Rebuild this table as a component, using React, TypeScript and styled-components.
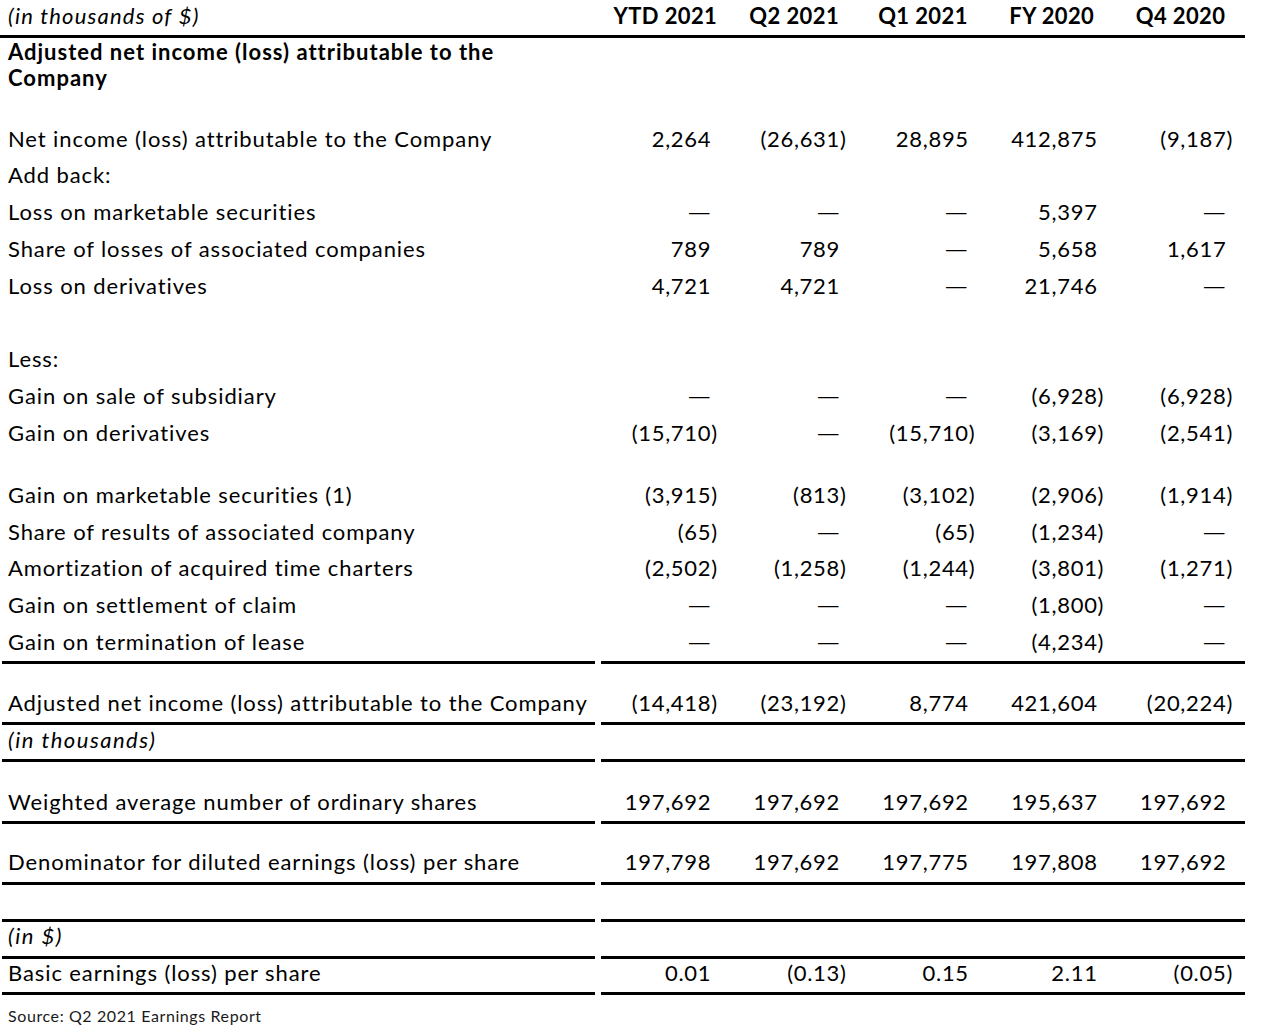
import React from "react";
import styled, { createGlobalStyle } from "styled-components";

const Global = createGlobalStyle`
  *, *::before, *::after { box-sizing: border-box; }
  html, body { margin: 0; padding: 0; background: #ffffff; }
  body {
    font-family: "Lato", "Carlito", "Open Sans", sans-serif;
    color: #000000;
    -webkit-font-smoothing: antialiased;
  }
`;

const Page = styled.div`
  width: 1286px;
  height: 1029px;
  background: #ffffff;
  overflow: hidden;
`;

const Table = styled.div`
  width: 1245px;
  display: flex;
  flex-direction: column;
  font-size: 22px;
  letter-spacing: 0.7px;
`;

const HeaderRow = styled.div`
  display: flex;
  height: 38px;
  padding-bottom: 4px;
  border-bottom: 3px solid #000;
  align-items: center;
`;

const HeaderLabel = styled.div`
  width: 601px;
  padding-left: 8px;
  font-style: italic;
  letter-spacing: 1.2px;
`;

const HeaderCols = styled.div`
  flex: 1;
  display: grid;
  grid-template-columns: repeat(5, 1fr);
`;

const HeaderCell = styled.div`
  text-align: center;
  font-weight: 700;
  letter-spacing: 0.4px;
`;

const TitleBlock = styled.div`
  height: 82.6px;
  padding: 1px 0 0 8px;
  font-weight: 700;
  line-height: 26px;
  letter-spacing: 1px;
  max-width: 540px;
`;

const Row = styled.div<{ $pt?: number }>`
  display: flex;
  padding-top: ${(p) => p.$pt ?? 0}px;
`;

const Label = styled.div<{ $h: number; $lift: number; $rule?: boolean; $italic?: boolean }>`
  width: 593px;
  margin-left: 2px;
  padding-left: 6px;
  height: ${(p) => p.$h + (p.$rule ? 3 : 0)}px;
  line-height: ${(p) => p.$h - p.$lift * 2}px;
  border-bottom: ${(p) => (p.$rule ? "3px solid #000" : "none")};
  font-style: ${(p) => (p.$italic ? "italic" : "normal")};
  letter-spacing: ${(p) => (p.$italic ? "1.5px" : "0.9px")};
  white-space: nowrap;
`;

const Values = styled.div<{ $h: number; $lift: number; $rule?: boolean }>`
  margin-left: 6px;
  flex: 1;
  display: grid;
  grid-template-columns: repeat(5, 1fr);
  height: ${(p) => p.$h + (p.$rule ? 3 : 0)}px;
  line-height: ${(p) => p.$h - p.$lift * 2}px;
  border-bottom: ${(p) => (p.$rule ? "3px solid #000" : "none")};
`;

const Value = styled.div`
  text-align: right;
  padding-right: 12px;
  white-space: nowrap;
`;

const Ghost = styled.span`
  visibility: hidden;
`;

const Dash = styled.span`
  display: inline-block;
  transform: scaleX(1.4);
  transform-origin: right center;
  letter-spacing: 0;
`;

const Spacer = styled.div<{ $h: number }>`
  height: ${(p) => p.$h}px;
`;

const Source = styled.div`
  padding: 11px 0 0 8px;
  font-size: 16px;
  letter-spacing: 0.6px;
  line-height: 20px;
  color: #1a1a1a;
`;

type RowDef =
  | {
      kind: "row";
      label: string;
      values?: string[];
      h?: number;
      pt?: number;
      lift?: number;
      rule?: boolean;
      italic?: boolean;
    }
  | { kind: "spacer"; h: number };

const H = 36.8;

const rows: RowDef[] = [
  { kind: "row", label: "Net income (loss) attributable to the Company", values: ["2,264", "(26,631)", "28,895", "412,875", "(9,187)"] },
  { kind: "row", label: "Add back:" },
  { kind: "row", label: "Loss on marketable securities", values: ["—", "—", "—", "5,397", "—"] },
  { kind: "row", label: "Share of losses of associated companies", values: ["789", "789", "—", "5,658", "1,617"] },
  { kind: "row", label: "Loss on derivatives", values: ["4,721", "4,721", "—", "21,746", "—"] },
  { kind: "spacer", h: H },
  { kind: "row", label: "Less:" },
  { kind: "row", label: "Gain on sale of subsidiary", values: ["—", "—", "—", "(6,928)", "(6,928)"] },
  { kind: "row", label: "Gain on derivatives", values: ["(15,710)", "—", "(15,710)", "(3,169)", "(2,541)"] },
  { kind: "spacer", h: 25 },
  { kind: "row", label: "Gain on marketable securities (1)", values: ["(3,915)", "(813)", "(3,102)", "(2,906)", "(1,914)"] },
  { kind: "row", label: "Share of results of associated company", values: ["(65)", "—", "(65)", "(1,234)", "—"] },
  { kind: "row", label: "Amortization of acquired time charters", values: ["(2,502)", "(1,258)", "(1,244)", "(3,801)", "(1,271)"] },
  { kind: "row", label: "Gain on settlement of claim", values: ["—", "—", "—", "(1,800)", "—"] },
  { kind: "row", label: "Gain on termination of lease", values: ["—", "—", "—", "(4,234)", "—"], rule: true },
  { kind: "row", label: "Adjusted net income (loss) attributable to the Company", values: ["(14,418)", "(23,192)", "8,774", "421,604", "(20,224)"], pt: 20, h: 38, rule: true },
  { kind: "row", label: "(in thousands)", h: 34, lift: 2, rule: true, italic: true },
  { kind: "row", label: "Weighted average number of ordinary shares", values: ["197,692", "197,692", "197,692", "195,637", "197,692"], pt: 20, h: 39, rule: true },
  { kind: "row", label: "Denominator for diluted earnings (loss) per share", values: ["197,798", "197,692", "197,775", "197,808", "197,692"], pt: 18, h: 40, rule: true },
  { kind: "row", label: "", h: 34, rule: true },
  { kind: "row", label: "(in $)", h: 34, lift: 3, rule: true, italic: true },
  { kind: "row", label: "Basic earnings (loss) per share", values: ["0.01", "(0.13)", "0.15", "2.11", "(0.05)"], h: 33, lift: 3, rule: true },
];

const Num: React.FC<{ v: string }> = ({ v }) => {
  if (v === "—")
    return (
      <>
        <Dash>—</Dash>
        <Ghost>)</Ghost>
      </>
    );
  if (v.startsWith("(")) return <>{v}</>;
  return (
    <>
      {v}
      <Ghost>)</Ghost>
    </>
  );
};

const headers = ["YTD 2021", "Q2 2021", "Q1 2021", "FY 2020", "Q4 2020"];

export default function App() {
  return (
    <Page>
      <Global />
      <Table>
        <HeaderRow>
          <HeaderLabel>(in thousands of $)</HeaderLabel>
          <HeaderCols>
            {headers.map((h) => (
              <HeaderCell key={h}>{h}</HeaderCell>
            ))}
          </HeaderCols>
        </HeaderRow>
        <TitleBlock>Adjusted net income (loss) attributable to the Company</TitleBlock>
        {rows.map((r, i) => {
          if (r.kind === "spacer") return <Spacer key={i} $h={r.h} />;
          const h = r.h ?? H;
          const lift = r.lift ?? 0;
          return (
            <Row key={i} $pt={r.pt}>
              <Label $h={h} $lift={lift} $rule={r.rule} $italic={r.italic}>
                {r.label}
              </Label>
              <Values $h={h} $lift={lift} $rule={r.rule}>
                {(r.values ?? ["", "", "", "", ""]).map((v, j) => (
                  <Value key={j}>{v ? <Num v={v} /> : null}</Value>
                ))}
              </Values>
            </Row>
          );
        })}
      </Table>
      <Source>Source: Q2 2021 Earnings Report</Source>
    </Page>
  );
}
